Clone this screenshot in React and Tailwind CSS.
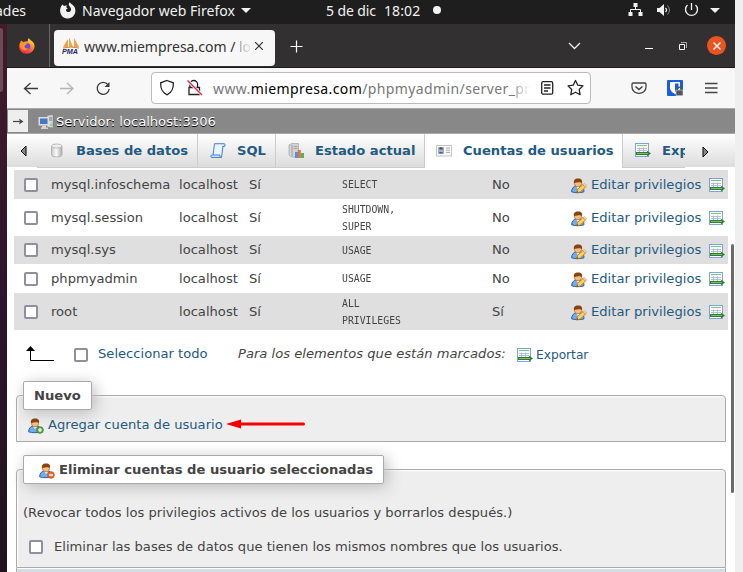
import React from "react";

function Check({ className = "" }) {
  return (
    <span className={`block h-[14px] w-[14px] shrink-0 rounded-[2px] border-2 border-[#8f8f9d] bg-white ${className}`} />
  );
}

function ExportIcon() {
  return (
    <svg width="16" height="16" viewBox="0 0 16 16" className="block shrink-0">
      <rect x=".5" y=".5" width="13" height="13" fill="#fff" stroke="#7fa4dc" />
      <path d="M2 2.500h10" stroke="#85c485" strokeWidth="1.200" />
      <path d="M2 5.500h10M2 7.500h10M4.500 4.500v4.500M8.500 4.500v4.500" stroke="#a9b9db" strokeWidth=".9" />
      <path d="M1 9h11V7.800l4 2.700-4 2.700V12H1z" fill="#2f7e2b" />
      <path d="M2 10.500h11" stroke="#8fcc86" strokeWidth=".8" />
    </svg>
  );
}

function Person({ badge }) {
  return (
    <svg width="16" height="16" viewBox="0 0 16 16" className="block shrink-0">
      <path d="M.6 13.8C.7 10 3 8.2 5 8l5 .3c2 .8 3 2.7 3 5.5-3 1.2-9.500 1.200-12.400 0z" fill="#75abeb" stroke="#2362b7" />
      <path d="M5 8l2 3 2.500-3" fill="#fff" />
      <circle cx="7" cy="5.300" r="3.600" fill="#f4bd83" stroke="#a76429" strokeWidth=".7" />
      <path d="M3 5C2.300 2 4 .4 7.300.5c3 0 4.500 2 3.600 4.500C9.500 3.700 6.500 4.600 3 5z" fill="#86450f" />
      {badge === "edit" && (
        <>
          <path d="M5.500 14.800l1-3.300 5.500-5 2.600 2.600-5.400 5z" fill="#ffd35a" stroke="#bd791c" strokeWidth=".9" />
          <path d="M12 6.500l1.300-.9 2.200 2-.9 1.500z" fill="#f5ded0" stroke="#ce8c54" strokeWidth=".6" />
          <path d="M5.500 14.800l.6-1.700 1.200 1.200z" fill="#48301c" />
        </>
      )}
      {badge === "add" && (
        <>
          <circle cx="12" cy="12" r="3.300" fill="#67ad43" stroke="#347b27" strokeWidth=".8" />
          <path d="M10 12h4M12 10v4" stroke="#fff" strokeWidth="1.200" />
        </>
      )}
      {badge === "del" && (
        <>
          <circle cx="12" cy="12" r="3.300" fill="#ed7031" stroke="#c9461c" strokeWidth=".8" />
          <path d="M10 12h4" stroke="#fff" strokeWidth="1.300" />
        </>
      )}
    </svg>
  );
}

function Database() {
  return (
    <svg width="16" height="16" viewBox="0 0 16 16" className="block shrink-0">
      <defs>
        <linearGradient id="cyl"><stop stopColor="#c6c6c6" /><stop offset=".45" stopColor="#fafafa" /><stop offset="1" stopColor="#acacac" /></linearGradient>
      </defs>
      <path d="M2.500 3v9c0 2.500 10.500 2.500 10.500 0V3" fill="url(#cyl)" stroke="#ababab" strokeWidth=".8" />
      <ellipse cx="7.750" cy="3" rx="5.250" ry="2" fill="#efefef" stroke="#adadad" strokeWidth=".8" />
    </svg>
  );
}

function Scroll() {
  return (
    <svg width="16" height="16" viewBox="0 0 16 16" className="block shrink-0">
      <path d="M4.500.7H14c1.500 0 1.700 2.500 0 2.800h-1l-1.500 11H2C.2 14.500.4 12 2 12h1z" fill="#cde3fb" stroke="#4b82c9" />
      <path d="M5.300 1.700h7l-1.500 10H4z" fill="#eaf5ff" />
      <path d="M3 12h7c-.6 1 0 2.500 1.200 2.500M12.500 3.500h2" fill="none" stroke="#4b82c9" />
    </svg>
  );
}

function Status() {
  return (
    <svg width="16" height="16" viewBox="0 0 16 16" className="block shrink-0">
      <path d="M1 2l3-1.500h6.500V13L8 14H3l-2-2z" fill="#d3d3d3" stroke="#aaa" strokeWidth=".8" />
      <path d="M4 2v11M5.500 3.500h4M5.500 5.500h4" stroke="#999" strokeWidth=".8" />
      <path d="M7 9h3v6H7z" fill="#4d8ded" />
      <path d="M9.800 7h3v8h-3z" fill="#f06b3c" />
      <path d="M12.700 10H16v5h-3.300z" fill="#4cb655" />
    </svg>
  );
}

function IdCard() {
  return (
    <svg width="16" height="16" viewBox="0 0 16 16" className="block shrink-0">
      <rect x=".5" y="2.500" width="15" height="10.500" fill="#fafafa" stroke="#c4c4c4" />
      <rect x="2" y="4" width="6" height="6.500" fill="#86b7ef" />
      <path d="M2.500 10.500c.3-2 4.700-2 5 0z" fill="#295fac" />
      <circle cx="5" cy="6.700" r="1.700" fill="#e8ac73" />
      <path d="M3.200 6.500c0-3 3.600-2.800 3.700 0z" fill="#74411f" />
      <path d="M10 5h4M10 7.200h4M10 9.400h4" stroke="#a8a8a8" />
    </svg>
  );
}

function TopBar() {
  return (
    <header className="flex h-6 w-[735px] items-center bg-[#1e1e1e] text-[14px] text-[#f2f2f2]" style={{ fontFamily: '"Noto Sans", sans-serif' }}>
      <div className="flex h-6 w-[60px] items-center overflow-hidden">
        <span className="-ml-[5px] -mt-[4px]">ades</span>
      </div>
      <svg width="16" height="17" viewBox="0 0 16 17" className="-mt-[4px] shrink-0">
        <path d="M.5 6C1 4 2 3 2.500 2.500L4 4c1-.6 2-.7 3-.5C6 5 6 6 8 6.500c-2 .2-2.500 2-1.300 3 1.500 1.300 4 .3 4.300-1.500.4-2-1-3.300-2-4.500C8.400 2.400 8.800 1 10 0c.1 2 3.200 2.500 4.500 5 2.500 5-.5 11-6.500 11.500C2 17-1 11 .5 6z" fill="#f2f2f2" />
      </svg>
      <span className="-mt-[4px] ml-[6px] w-[155px] whitespace-nowrap tracking-[0.03px]">Navegador web Firefox</span>
      <svg width="10" height="5" viewBox="0 0 10 5" className="-mt-[3px] ml-1"><path d="M0 0h10L5 5z" fill="#f2f2f2" /></svg>
      <span className="-mt-[4px] ml-[75px] w-[58px] whitespace-nowrap tracking-[-0.1px]">5 de dic</span>
      <span className="-mt-[4px] w-[49px] whitespace-nowrap tracking-[0.1px]">18:02</span>
      <span className="-mt-[4px] h-2 w-2 rounded-full bg-[#f2f2f2]" />
      <svg width="107" height="24" viewBox="0 0 107 24" className="ml-[187px]" fill="none" stroke="#f2f2f2">
        <path d="M5 3h4v4H5zM0 12h4v4H0zM10 12h4v4h-4z" fill="#f2f2f2" stroke="none" transform="translate(.5)" />
        <path d="M7.500 7v3M2.500 12V9.500h10V12" />
        <path d="M29 8h2.500L36 4v12l-4.500-4H29z" fill="#f2f2f2" stroke="none" />
        <path d="M37.500 8q2 2 0 4" strokeWidth="1.300" />
        <path d="M39.500 5.500q4 4.500 0 9" stroke="#888" />
        <path d="M59.500 5a6 6 0 1 0 8 0M63.500 3v7" strokeWidth="1.300" />
        <path d="M82 8h10l-5 5z" fill="#f2f2f2" stroke="none" />
      </svg>
    </header>
  );
}

function TabStrip() {
  return (
    <div className="flex h-[44px] items-center border-b border-[#1c1b1c] bg-[#323031]">
      <svg width="16" height="16" viewBox="0 0 16 16" className="ml-3 shrink-0">
        <defs>
          <linearGradient id="fox" x1=".8" y1="0" x2=".3" y2="1"><stop stopColor="#fff044" /><stop offset=".45" stopColor="#ff8b20" /><stop offset="1" stopColor="#f4204f" /></linearGradient>
        </defs>
        <path d="M.5 6C1 4 2 3 2.500 2.500L4 4c2-.5 3-.5 5-.7C8.500 2 9 1 10 0c.1 2 3.500 2.500 5 5.500 2 5-1.500 10-7 10.300C2 16-1 11 .5 6z" fill="url(#fox)" />
        <circle cx="8" cy="8.500" r="3.300" fill="#7542e5" />
        <path d="M1 6c2-2 5-2 7 0-1 1-2 1-2.500 2-.3 2 2 3 4 2-1 3-7 3-8-1z" fill="#ff9820" />
      </svg>
      <span className="ml-[14px] h-[43px] w-px shrink-0 bg-[#69676a]" />
      <div className="ml-1 mt-1 flex h-9 w-[221px] shrink-0 items-center rounded-[4px] bg-[#f7f7f7]">
        <svg width="18" height="18" viewBox="0 0 18 18" className="-mt-1 ml-2 shrink-0">
          <path d="M1 10L6 2v8zM7 10V0l4 10zM12 10V1l5 9z" fill="#f5a047" />
          <path d="M1 11q8-2 16 0" stroke="#c98843" fill="none" />
          <text x="0" y="17" fontSize="6.500" fontWeight="bold" fontStyle="italic" fontFamily="Liberation Sans, sans-serif" textLength="16" lengthAdjust="spacingAndGlyphs" fill="#252a66">PMA</text>
        </svg>
        <span className="-mt-[2px] ml-1 w-[169px] overflow-hidden whitespace-nowrap text-[14px] text-[#333]" style={{ fontFamily: '"Noto Sans", sans-serif' }}>
          www.miempresa.com / <span className="bg-linear-to-r from-[#999] to-[#eee] bg-clip-text text-transparent">lo</span>
        </span>
        <svg width="8" height="8" viewBox="0 0 8 8" className="-mt-1 ml-[2px] shrink-0"><path d="M0 0l8 8M8 0L0 8" stroke="#333" strokeWidth="1.200" /></svg>
      </div>
      <svg width="13" height="13" viewBox="0 0 13 13" className="ml-[15px] mt-[2px] shrink-0"><path d="M6.500.5v12M.5 6.500h12" stroke="#fff" strokeWidth="1.200" /></svg>
      <svg width="13" height="8" viewBox="0 0 13 8" className="ml-[265px] shrink-0"><path d="M1 1l5.500 5.500L12 1" fill="none" stroke="#eee" strokeWidth="1.300" /></svg>
      <span className="ml-[64px] mt-[5px] h-px w-2 shrink-0 bg-white" />
      <svg width="8" height="8" viewBox="0 0 8 8" className="ml-[26px] shrink-0"><path d="M.5 2.500h5v5h-5z" fill="none" stroke="#fff" /><path d="M2 .5h5.500V6" fill="none" stroke="#aaa" /></svg>
      <span className="ml-5 flex h-[19px] w-[19px] shrink-0 items-center justify-center rounded-full bg-[#e95420]">
        <svg width="8" height="8" viewBox="0 0 8 8"><path d="M.5.5l7 7M7.500.5l-7 7" stroke="#fff" strokeWidth="1.400" /></svg>
      </span>
    </div>
  );
}

function NavBar() {
  return (
    <div className="flex h-[40px] items-center bg-[#f7f7f7]">
      <svg width="96" height="20" viewBox="0 0 96 20" className="ml-[16px] shrink-0" fill="none" stroke="#3b3b3b" strokeWidth="1.300">
        <path d="M7.500 5L1.500 10.500l6 5.500M1.500 10.500H15" />
        <path d="M44 5l6 5.500-6 5.500M50 10.500H37" stroke="#b4b4b4" />
        <path d="M85 6.700A6 6 0 1 0 86.200 11" />
        <path d="M86.500 4v5h-5z" fill="#3b3b3b" stroke="none" />
      </svg>
      <div className="ml-8 flex h-8 w-[440px] shrink-0 items-center rounded-[4px] border border-[#bbb] bg-white">
        <svg width="46" height="20" viewBox="0 0 46 20" className="ml-[7px] shrink-0" fill="none" stroke="#222" strokeWidth="1.300">
          <path d="M8 2.500l6.300 2.300c.3 5-1.800 10.200-6.300 12-4.500-1.800-6.600-7-6.300-12z" />
          <path d="M31 9V6.300a3.800 3.800 0 0 1 7.600 0V9M30 9.500h10.500v7H30z" />
          <path d="M28.500 2.500L43 17" stroke="#fff" strokeWidth="2.800" />
          <path d="M28.500 2.500L43 17" stroke="#e22850" strokeWidth="1.400" />
        </svg>
        <span className="ml-2 w-[317px] shrink-0 overflow-hidden whitespace-nowrap text-[14px] tracking-[0.39px] text-[#777]" style={{ fontFamily: '"Noto Sans", sans-serif' }}>
          www.<span className="text-black">miempresa.com</span>/phpmyadmin/server_<span className="bg-linear-to-r from-[#999] to-[#fff] bg-clip-text text-transparent">pr</span>
        </span>
        <svg width="46" height="20" viewBox="0 0 46 20" className="ml-[10px] shrink-0" fill="none" stroke="#222" strokeWidth="1.300">
          <rect x="1.700" y="3.700" width="11" height="12.500" rx="1.500" />
          <path d="M4 7h6.500M4 10h6.500M4 13h4" />
          <path d="M35.500 2.500l2.300 4.700 5.200.7-3.800 3.600.9 5.200-4.600-2.500-4.700 2.500.9-5.200-3.700-3.600 5.200-.7z" strokeLinejoin="round" />
        </svg>
      </div>
      <svg width="88" height="20" viewBox="0 0 88 20" className="ml-[40px] shrink-0" fill="none" stroke="#444" strokeWidth="1.300">
        <path d="M2 5h12c.7 0 1 .3 1 1v3c0 8.500-14 8.500-14 0V6c0-.7.300-1 1-1z" />
        <path d="M4.500 8.500L8 11.500l3.500-3" strokeWidth="1.600" />
        <rect x="36" y="2" width="16" height="16" rx="1" fill="#175ddc" stroke="none" />
        <path d="M39 4h10v7q-1 3-5 5-4-2-5-5z" fill="#fff" stroke="none" />
        <path d="M44 5.500h3.500v5q-1 2-3.500 3.500z" fill="#175ddc" stroke="none" />
        <rect x="45" y="12" width="7" height="5.500" fill="#555" stroke="#eee" strokeWidth=".6" />
        <path d="M46.500 12v-1.500q2-2.500 4 0V12" stroke="#555" />
        <path d="M74 5.500h12.500M74 10h12.500M74 14.500h12.500" />
      </svg>
    </div>
  );
}

function Breadcrumb() {
  return (
    <div className="flex h-[26px] items-center border-y border-[#aaa] bg-[#888]">
      <span className="ml-px flex h-[22px] w-5 items-center justify-center bg-[#eee]">
        <svg width="11" height="7" viewBox="0 0 11 7"><path d="M0 3.500h8" stroke="#444" strokeWidth="1.200" /><path d="M6 .5l4.500 3L6 6.500 7 3.500z" fill="#444" /></svg>
      </span>
      <svg width="16" height="16" viewBox="0 0 16 16" className="ml-[10px] mt-[2px] shrink-0">
        <path d="M9 1.500l6-1V14l-6-1z" fill="#d8d8d8" stroke="#777" strokeWidth=".5" />
        <path d="M11 4h3M11 6h3" stroke="#777" />
        <rect x=".5" y="3" width="10.500" height="8.500" fill="#ddd" />
        <rect x="2" y="4.500" width="7.500" height="5.500" fill="#4677c7" />
        <path d="M4 11.500h4v2h2v1.500H3v-1.500h1z" fill="#d3d3d3" />
        <circle cx="13" cy="11" r="1" fill="#6cde40" />
      </svg>
      <span className="ml-[2px] mt-px text-[13.12px] text-white [text-shadow:0_1px_0_#000]">Servidor: localhost:3306</span>
    </div>
  );
}

function Tab({ w, pad, icon, children, active }) {
  return (
    <div
      style={{ width: w, paddingLeft: pad }}
      className={`flex h-[34px] shrink-0 items-center gap-[11px] overflow-hidden whitespace-nowrap border-r border-[#ccc] text-[13.12px] font-bold text-[#235a81] ${
        active ? "bg-white" : "border-b bg-linear-to-b from-white to-[#dcdcdc]"
      }`}
    >
      {icon}
      <span>{children}</span>
    </div>
  );
}

function Tabs() {
  return (
    <nav className="flex h-9 items-start bg-white">
      <div className="flex h-[33px] w-[30px] shrink-0 items-center bg-linear-to-b from-white to-[#dcdcdc]">
        <svg width="8" height="12" viewBox="0 0 8 12" className="ml-[13px] mt-px"><path d="M6 1v10L1 6z" fill="#888" stroke="#000" /></svg>
      </div>
      <Tab w={161} pad={12} icon={<Database />}>Bases de datos</Tab>
      <Tab w={78} pad={12} icon={<Scroll />}>SQL</Tab>
      <Tab w={149} pad={12} icon={<Status />}>Estado actual</Tab>
      <Tab w={198} pad={11} icon={<IdCard />} active>Cuentas de usuarios</Tab>
      <div className="flex h-[34px] w-[62px] shrink-0 items-center gap-[11px] overflow-hidden border-b border-[#ccc] bg-linear-to-b from-white to-[#dcdcdc] pl-3 text-[13.12px] font-bold text-[#235a81]">
        <ExportIcon />
        <span>Exportar</span>
      </div>
      <div className="flex h-[33px] flex-1 items-center bg-linear-to-b from-white to-[#dcdcdc]">
        <svg width="8" height="12" viewBox="0 0 8 12" className="ml-[17px] mt-[2px]"><path d="M1 1v10l5-5z" fill="#888" stroke="#000" /></svg>
      </div>
    </nav>
  );
}

const users = [
  { name: "mysql.infoschema", privileges: ["SELECT"], grant: "No", h: 29 },
  { name: "mysql.session", privileges: ["SHUTDOWN,", "SUPER"], grant: "No", h: 37 },
  { name: "mysql.sys", privileges: ["USAGE"], grant: "No", h: 28 },
  { name: "phpmyadmin", privileges: ["USAGE"], grant: "No", h: 29 },
  { name: "root", privileges: ["ALL", "PRIVILEGES"], grant: "Sí", h: 37 },
];

function UserTable() {
  return (
    <section className="ml-[7px] w-[714px]">
      {users.map((u, i) => (
        <div key={u.name} style={{ height: u.h }} className={`flex items-center whitespace-nowrap ${i % 2 === 0 ? "bg-[#dfdfdf]" : "bg-white"}`}>
          <Check className="ml-[10px]" />
          <span className="ml-[13px] w-[128px] shrink-0">{u.name}</span>
          <span className="w-[70px] shrink-0">localhost</span>
          <span className="w-[93px] shrink-0">Sí</span>
          <span className="w-[150px] shrink-0 origin-left scale-x-[0.89] text-[11px] leading-[17px]" style={{ fontFamily: '"DejaVu Sans Mono", monospace' }}>
            {u.privileges.map((p) => (
              <span key={p} className="block">{p}</span>
            ))}
          </span>
          <span className="w-[79px] shrink-0">{u.grant}</span>
          <span className="mt-[3px] shrink-0"><Person badge="edit" /></span>
          <span className="ml-1 w-[118px] shrink-0 text-[#235a81]">Editar privilegios</span>
          <span className="mt-[3px] shrink-0"><ExportIcon /></span>
        </div>
      ))}
    </section>
  );
}

function Selection() {
  return (
    <div className="flex h-[48px] items-center whitespace-nowrap">
      <svg width="30" height="17" viewBox="0 0 30 17" className="ml-[18px] shrink-0"><path d="M5.500 3v12h23.500" fill="none" stroke="#000" transform="translate(0 -.5)" /><path d="M1 5l4.500-5L10 5z" fill="#000" /></svg>
      <Check className="ml-[19px] mt-[2px]" />
      <span className="ml-[10px] w-[140px] shrink-0 text-[#235a81]">Seleccionar todo</span>
      <span className="w-[279px] shrink-0 italic">Para los elementos que están marcados:</span>
      <span className="mt-[3px]"><ExportIcon /></span>
      <span className="ml-[3px] mt-px text-[12.2px] text-[#235a81]">Exportar</span>
    </div>
  );
}

function Legend({ w, children }) {
  return (
    <div style={{ width: w }} className="-mt-[15px] ml-[6px] flex h-[29px] shrink-0 items-center whitespace-nowrap rounded-[2px] border border-[#aaa] bg-white pl-[10px] font-bold shadow-[3px_3px_15px_#bbb]">
      {children}
    </div>
  );
}

function Page() {
  return (
    <main className="h-[402px] overflow-hidden bg-white text-[13.12px] leading-[16px] text-[#444]">
      <UserTable />
      <Selection />
      <section className="ml-[9px] mt-[17px] h-[47px] w-[710px] rounded-t-[4px] border border-[#aaa] bg-[#eee] shadow-[inset_1px_1px_2px_#fff]">
        <Legend w={69}>Nuevo</Legend>
        <div className="flex items-center pl-[11px] pt-[6px]">
          <span className="mt-[2px]"><Person badge="add" /></span>
          <span className="ml-1 whitespace-nowrap text-[#235a81]">Agregar cuenta de usuario</span>
          <svg width="80" height="10" viewBox="0 0 80 10" className="-mt-[2px] ml-[3px] shrink-0"><path d="M13 5h64.500" stroke="#f60000" strokeWidth="3" strokeLinecap="round" /><path d="M0 5L15 .5v9z" fill="#f60000" /></svg>
        </div>
      </section>
      <section className="ml-[9px] mt-[27px] h-[99px] w-[710px] rounded-t-[4px] border border-[#aaa] bg-[#eee] shadow-[inset_1px_1px_2px_#fff]">
        <Legend w={361}>
          <span className="ml-[5px] mt-[2px]"><Person badge="del" /></span>
          <span className="ml-1">Eliminar cuentas de usuario seleccionadas</span>
        </Legend>
        <p className="pl-[6px] pt-[21px]">(Revocar todos los privilegios activos de los usuarios y borrarlos después.)</p>
        <div className="flex items-center pl-3 pt-[18px]">
          <Check />
          <span className="ml-[11px] whitespace-nowrap">Eliminar las bases de datos que tienen los mismos nombres que los usuarios.</span>
        </div>
      </section>
      <footer className="ml-[9px] h-4 w-[710px] border-x border-[#aaa] bg-[#d3dce3] shadow-[inset_0_1px_1px_#fff]" />
    </main>
  );
}

export default function App() {
  return (
    <div className="relative h-[572px] w-[743px] overflow-hidden bg-[#efefef]">
      <TopBar />
      <div className="flex">
        <aside className="h-[548px] w-[7px] shrink-0 bg-linear-to-b from-[#431b29] via-[#2e142d] to-[#20131d] pt-1">
          <div className="h-[64px] w-[3px] rounded-r-[4px] bg-[#6a4c57]" />
        </aside>
        <div className="w-[728px] shrink-0 bg-white" style={{ fontFamily: '"DejaVu Sans", sans-serif' }}>
          <TabStrip />
          <NavBar />
          <Breadcrumb />
          <Tabs />
          <Page />
        </div>
      </div>
      <div className="absolute left-[731px] top-[244px] h-[249px] w-[3px] rounded-full bg-[#6b6b6b]" />
    </div>
  );
}
